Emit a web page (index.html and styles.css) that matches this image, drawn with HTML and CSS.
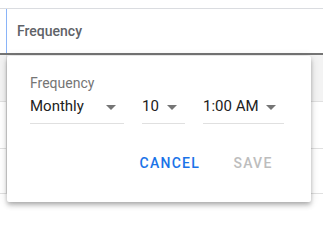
FILE: index.html
```html
<!DOCTYPE html>
<html>
<head>
<meta charset="utf-8">
<link rel="stylesheet" href="styles.css">
</head>
<body>
<div class="table">
  <div class="head">
    <div class="gutter"></div>
    <div class="hcell">Frequency</div>
  </div>
  <div class="row row-active"><div class="gutter"></div><div class="cell"></div></div>
  <div class="row"><div class="gutter"></div><div class="cell"></div></div>
  <div class="row row-last"><div class="gutter"></div><div class="cell"></div></div>
</div>
<div class="popup">
  <div class="label">Frequency</div>
  <div class="fields">
    <div class="select sel-month"><span class="value">Monthly</span><span class="arrow"></span></div>
    <div class="select sel-day"><span class="value">10</span><span class="arrow"></span></div>
    <div class="select sel-time"><span class="value">1:00 AM</span><span class="arrow"></span></div>
  </div>
  <div class="actions">
    <button class="btn btn-cancel">CANCEL</button>
    <button class="btn btn-save">SAVE</button>
  </div>
</div>
</body>
</html>
```
FILE: styles.css
```css
html, body {
  margin: 0;
  padding: 0;
  background: #fff;
  font-family: Roboto, "Liberation Sans", sans-serif;
}
body {
  width: 323px;
  height: 211px;
  overflow: hidden;
  position: relative;
}
.table {
  margin-top: 8px;
  border-top: 1px solid #dadce0;
}
.head {
  display: flex;
  height: 44px;
  border-bottom: 2px solid #757575;
}
.gutter {
  width: 6px;
  flex: none;
}
.hcell {
  flex: 1;
  border-left: 1px solid #8ab4f8;
  display: flex;
  align-items: center;
  padding-left: 10px;
  font-size: 14px;
  font-weight: 500;
  color: #5f6368;
}
.row {
  display: flex;
  height: 46px;
  border-bottom: 1px solid #e0e0e0;
}
.row-last {
  height: 44px;
}
.row-active {
  background: #f3f3f3;
}
.cell {
  flex: 1;
  border-left: 1px solid #e0e0e0;
}
.popup {
  position: absolute;
  left: 7px;
  top: 56px;
  width: 304px;
  height: 146px;
  box-sizing: border-box;
  background: #fff;
  padding: 17px 0 0 23px;
  box-shadow: 0 2px 4px -1px rgba(0,0,0,.2), 0 4px 5px 0 rgba(0,0,0,.14), 0 1px 10px 0 rgba(0,0,0,.12);
  border-radius: 2px;
}
.label {
  font-size: 14px;
  line-height: 20px;
  color: #757575;
}
.fields {
  display: flex;
  gap: 18px;
  margin-top: 3px;
}
.select {
  display: flex;
  justify-content: space-between;
  align-items: flex-start;
  height: 27px;
  border-bottom: 1px solid #e0e0e0;
  padding-right: 8px;
  box-sizing: content-box;
}
.sel-month { width: 86px; }
.sel-day { width: 35px; }
.sel-time { width: 73px; }
.value {
  font-size: 15px;
  line-height: 20px;
  color: #212121;
}
.arrow {
  width: 0;
  height: 0;
  margin-top: 9px;
  border-left: 5px solid transparent;
  border-right: 5px solid transparent;
  border-top: 5px solid #757575;
}
.actions {
  display: flex;
  justify-content: flex-end;
  gap: 13px;
  margin-top: 21px;
  padding-right: 26px;
}
.btn {
  background: none;
  border: none;
  padding: 0 8px;
  min-width: 64px;
  height: 36px;
  line-height: 36px;
  font-family: Roboto, "Liberation Sans", sans-serif;
  font-size: 14px;
  font-weight: 500;
  letter-spacing: 1.25px;
  text-align: center;
}
.btn-cancel { color: #1a73e8; }
.btn-save { color: #bdbdbd; }
```
